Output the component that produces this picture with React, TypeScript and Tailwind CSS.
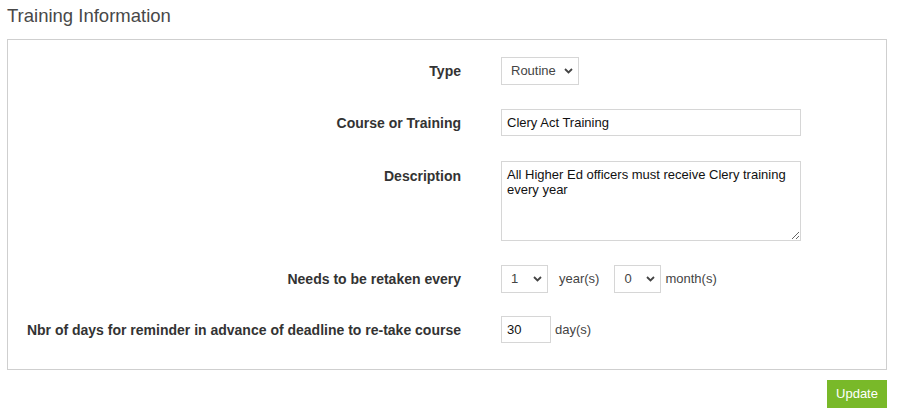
import React from "react";

const font = { fontFamily: '"Liberation Sans", Arial, sans-serif' };

function Chevron() {
  return (
    <svg
      width="9"
      height="6"
      viewBox="0 0 9 6"
      className="pointer-events-none absolute right-[6px] top-1/2 -translate-y-1/2"
    >
      <path d="M1 1l3.5 3.5L8 1" fill="none" stroke="#444" strokeWidth="1.8" />
    </svg>
  );
}

function Select({ value, options, width }: { value: string; options: string[]; width: string }) {
  return (
    <div className={`relative ${width} h-[28px]`}>
      <select
        defaultValue={value}
        className="h-full w-full appearance-none border border-[#d6d6d6] bg-white pl-[9px] pr-5 text-[13px] text-[#444] outline-none"
      >
        {options.map((o) => (
          <option key={o}>{o}</option>
        ))}
      </select>
      <Chevron />
    </div>
  );
}

function Row({ label, top, className, children }: { label: string; top?: boolean; className?: string; children: React.ReactNode }) {
  return (
    <div className={`flex ${top ? "items-start" : "items-center"} ${className ?? ""}`}>
      <div
        className={`w-[453px] shrink-0 text-right text-[14px] font-bold leading-5 text-[#333] ${top ? "pt-[5px]" : ""}`}
      >
        {label}
      </div>
      <div className="ml-10 flex items-center">{children}</div>
    </div>
  );
}

export default function App() {
  return (
    <div className="min-h-[415px] w-[897px] bg-white pl-[7px] pr-[10px]" style={font}>
      <h2 className="h-[39px] pt-[5px] text-[18.5px] leading-[22px] font-normal text-[#484848]">
        Training Information
      </h2>

      <div className="border border-[#cfcfcf] pt-[17px] pb-[26px]">
        <Row label="Type">
          <Select value="Routine" options={["Routine", "One-time"]} width="w-[78px]" />
        </Row>

        <Row label="Course or Training" className="mt-[24px]">
          <input
            defaultValue="Clery Act Training"
            className="h-[27px] w-[300px] border border-[#d6d6d6] px-[5px] text-[13px] text-[#111] outline-none"
          />
        </Row>

        <Row label="Description" top className="mt-[25px]">
          <textarea
            defaultValue="All Higher Ed officers must receive Clery training every year"
            className="h-[80px] w-[300px] border border-[#d6d6d6] px-[5px] py-[5px] text-[13px] leading-[15px] text-[#111] outline-none"
          />
        </Row>

        <Row label="Needs to be retaken every" className="mt-[24px]">
          <Select value="1" options={["0", "1", "2", "3", "4", "5"]} width="w-[47px]" />
          <span className="ml-[11px] text-[13px] text-[#444]">year(s)</span>
          <div className="ml-[15px]">
            <Select value="0" options={["0", "1", "2", "3", "4", "5", "6", "7", "8", "9", "10", "11"]} width="w-[47px]" />
          </div>
          <span className="ml-[4px] text-[13px] text-[#444]">month(s)</span>
        </Row>

        <Row label="Nbr of days for reminder in advance of deadline to re-take course" className="mt-[23px]">
          <input
            defaultValue="30"
            className="h-[27px] w-[50px] border border-[#d6d6d6] px-[5px] text-[13px] text-[#111] outline-none"
          />
          <span className="ml-[4px] text-[13px] text-[#444]">day(s)</span>
        </Row>
      </div>

      <div className="mt-[10px] flex justify-end">
        <button className="h-[28px] w-[60px] bg-[#79b929] text-[13px] text-white">Update</button>
      </div>
    </div>
  );
}
